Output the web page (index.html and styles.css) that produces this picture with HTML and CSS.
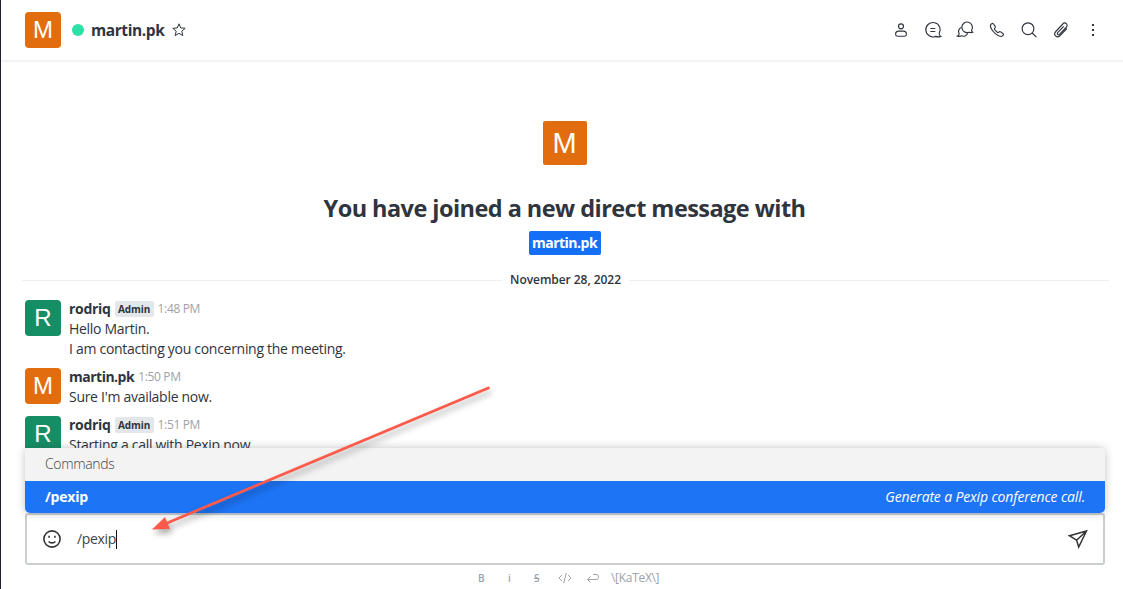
FILE: index.html
```
<!DOCTYPE html>
<html lang="en">
<head>
<meta charset="utf-8">
<title>martin.pk</title>
<link rel="stylesheet" href="styles.css">
</head>
<body>
<div class="room">
  <header class="header">
    <span class="avatar orange">M</span>
    <span class="status"></span>
    <span class="title">martin.pk</span>
    <svg class="star" viewBox="0 0 16 16"><path d="M8 1.800l1.700 4.100 4.500.4-3.400 2.900 1 4.400L8 11.300l-3.800 2.300 1-4.400L1.800 6.300l4.500-.4z"/></svg>
    <nav class="tools">
      <svg viewBox="0 0 20 20"><circle cx="10" cy="6.300" r="2.500"/><path d="M4.600 14.300c0-2 1.200-3.200 3-3.200h4.800c1.800 0 3 1.200 3 3.200 0 1.300-.6 1.900-1.700 1.900H6.300c-1.100 0-1.700-.6-1.700-1.900z"/></svg>
      <svg viewBox="0 0 20 20"><path d="M16.200 13.400A7.200 7.200 0 1 0 12.700 16.400c1.700.7 3.300.7 5.100 0-1.100-.6-1.700-1.700-1.600-3zM7.300 8.500h5M7.300 11.500h5"/></svg>
      <svg viewBox="0 0 20 20"><path d="M16.600 10.200A5.300 5.300 0 1 0 14 12.300c1.200.4 2.500.5 3.700 0-.8-.5-1.200-1.200-1.100-2.100zM6 7.600a5 5 0 0 0-1.900 6.200c0 1.200-.5 1.900-1.500 2.300 1.300.5 2.600.3 3.800-.3 2.400 1 5.200.2 6.300-2.500"/></svg>
      <svg viewBox="0 0 20 20"><path d="M4.100 4.100c.7-.7 1.700-1 2.400-.1l1.700 2.300c.5.700.2 1.300-.4 1.900-.6.500-.5 1 0 1.600l2.400 2.400c.6.600 1.100.6 1.600 0 .6-.7 1.200-.8 1.900-.3l2.200 1.600c.8.6.6 1.500-.2 2.200-1.300 1.300-4 .8-7.300-2.100C4.300 10.200 2.300 6 4.100 4.100z"/></svg>
      <svg viewBox="0 0 20 20"><circle cx="9" cy="8.700" r="5.900"/><path d="M13.200 13l4.200 4.200"/></svg>
      <svg viewBox="0 0 20 20"><path class="clip" d="M12.700 6.300l-6 6.400c-1.200 1.300.6 3 1.800 1.700l6.800-7.200c2.400-2.700-1.100-5.700-3.500-3.200l-7 7.500c-3.100 3.500 1.300 7.200 4.300 4.100l6.700-7.100"/></svg>
      <svg class="dots" viewBox="0 0 20 20"><path d="M9 4h2v2H9zM9 9h2v2H9zM9 14h2v2H9z"/></svg>
    </nav>
  </header>

  <main class="messages">
    <section class="intro">
      <span class="avatar large orange">M</span>
      <h1>You have joined a new direct message with</h1>
      <span class="mention">martin.pk</span>
    </section>
    <div class="divider"><span>November 28, 2022</span></div>
    <article class="message">
      <span class="avatar green">R</span>
      <div class="body">
        <div class="meta"><b>rodriq</b><span class="role">Admin</span><time>1:48 PM</time></div>
        <p>Hello Martin.</p>
        <p>I am contacting you concerning the meeting.</p>
      </div>
    </article>
    <article class="message">
      <span class="avatar orange">M</span>
      <div class="body">
        <div class="meta"><b>martin.pk</b><time>1:50 PM</time></div>
        <p>Sure I'm available now.</p>
      </div>
    </article>
    <article class="message">
      <span class="avatar green">R</span>
      <div class="body">
        <div class="meta"><b>rodriq</b><span class="role">Admin</span><time>1:51 PM</time></div>
        <p>Starting a call with Pexip now</p>
      </div>
    </article>
  </main>

  <footer class="footer">
    <div class="popup">
      <div class="popup-title"><span>Commands</span></div>
      <div class="command"><b>/pexip</b><i>Generate a Pexip conference call.</i></div>
    </div>
    <div class="composer">
      <svg class="smile" viewBox="0 0 20 20"><circle cx="10" cy="10" r="8.100"/><path d="M6.600 12.400c1.700 2 5.100 2 6.800 0M7.100 6.700v2M12.900 6.700v2"/></svg>
      <span class="typed">/pexip</span><span class="caret"></span>
      <svg class="send" viewBox="0 0 20 20"><path d="M1.500 6.700L18.500 2 10.700 18 8.600 11.200zM8.600 11.200L18.500 2"/></svg>
    </div>
    <div class="format">
      <b>B</b><span class="info">i</span><s>S</s>
      <svg viewBox="0 0 14 12"><path d="M4 3L1 6l3 3M10 3l3 3-3 3M8.300 1l-2.600 10"/></svg>
      <svg viewBox="0 0 14 12"><path d="M4.500 4.500l-3 3 3 3M1.500 7.500H10c2 0 2.500-.8 2.500-2.300S12 2.500 10 2.500H7"/></svg>
      <span class="katex">\[KaTeX\]</span>
    </div>
  </footer>
</div>
<svg class="arrow" viewBox="0 0 370 170"><path d="M349.500 12.500L26 148.500" /><path class="head" d="M12 154.500L25 142l5 12z"/></svg>
</body>
</html>
```

FILE: styles.css
```
* { box-sizing: border-box; }
body {
  margin: 0;
  background: #fff;
  color: #2f343d;
  font: 14px/20px "Open Sans", "Noto Sans", sans-serif;
}
svg { display: block; fill: none; stroke: #2f343d; flex: none; }
p, h1 { margin: 0; }
p, h1, span, b, i, time { white-space: nowrap; }
.room {
  height: 589px;
  display: flex;
  flex-direction: column;
  overflow: hidden;
  border-left: 1px solid #1f2329;
}
.header {
  height: 62px;
  flex: none;
  display: flex;
  align-items: center;
  padding: 0 20px 0 24px;
  border-bottom: 2px solid #f2f3f5;
}
.avatar {
  width: 36px;
  height: 36px;
  flex: none;
  display: flex;
  align-items: center;
  justify-content: center;
  border-radius: 4px;
  color: #fff;
  font: 24px/36px "Liberation Sans", Arial, sans-serif;
}
.orange { background: #e26d0e; }
.green { background: #158d65; }
.large { width: 44px; height: 44px; border-radius: 2px; font-size: 29px; }
.status { width: 12px; height: 12px; margin: 0 7px 0 11px; border-radius: 50%; background: #2de0a5; }
.title { width: 74px; font-size: 15.500px; font-weight: 700; letter-spacing: -.42px; }
.star { width: 16px; height: 16px; margin-left: 6px; }
.tools { display: flex; gap: 12px; margin-left: auto; }
.tools svg { width: 20px; height: 20px; stroke-width: 1.150; }
.tools .dots { fill: #2f343d; stroke: none; }
.messages { flex: 1; min-height: 0; }
.intro { height: 193px; padding: 59px 0 0 5px; display: flex; flex-direction: column; align-items: center; }
h1 { margin-top: 27px; font-size: 23.500px; line-height: 32px; font-weight: 700; letter-spacing: -.55px; }
.mention {
  height: 24px;
  width: 72px;
  margin-top: 7px;
  border-radius: 2px;
  background: #156ff5;
  color: #fff;
  font-weight: 700;
  line-height: 24px;
  letter-spacing: -.5px;
  text-align: center;
}
.divider {
  height: 20px;
  margin: 15px 14px 0 21px;
  display: flex;
  align-items: center;
  gap: 8px;
  font-size: 12px;
  font-weight: 600;
  letter-spacing: -.05px;
}
.divider::before, .divider::after { content: ""; flex: 1; height: 1px; background: #eeeff1; }
.message { display: flex; gap: 8px; padding: 0 24px; margin-bottom: 7px; }
.divider + .message { margin-top: 8px; }
.message .avatar { margin-top: 2px; }
.body { padding-top: 1px; }
.meta { height: 20px; display: flex; align-items: center; gap: 4px; }
.meta b { letter-spacing: -.5px; }
.meta b:has(+ .role) { letter-spacing: -.3px; }
.role {
  width: 39px;
  height: 16px;
  border-radius: 2px;
  background: #e4e7ea;
  font-size: 10px;
  font-weight: 700;
  line-height: 16px;
  text-align: center;
  letter-spacing: -.1px;
}
time { color: #9ea2a8; font-size: 12px; letter-spacing: -.35px; }
.message p { letter-spacing: -.29px; }
.footer { position: relative; height: 141px; flex: none; padding: 0 18px 0 24px; background: #fff; }
.popup {
  height: 65px;
  position: relative;
  border-radius: 5px;
  box-shadow: 0 0 8px rgba(47, 52, 61, .3);
}
.popup-title {
  height: 33px;
  padding: 6px 20px;
  border-radius: 5px 5px 0 0;
  background: #f3f3f3;
  color: #3f4248;
  font-weight: 300;
  letter-spacing: -.35px;
}
.command {
  height: 32px;
  padding: 0 20px;
  display: flex;
  align-items: center;
  justify-content: space-between;
  border-radius: 0 0 5px 5px;
  background: #1d74f5;
  color: #fff;
}
.command b { letter-spacing: -.2px; }
.command i { letter-spacing: -.15px; }
.composer {
  height: 52px;
  display: flex;
  align-items: center;
  padding: 0 15px;
  border: 2px solid #cbced1;
  border-radius: 3px;
}
.smile { width: 20px; height: 20px; stroke: #333; stroke-width: 1.600; }
.typed { margin-left: 15px; color: #444; letter-spacing: -.35px; }
.caret { width: 1px; height: 19px; background: #111; }
.send { width: 20px; height: 20px; margin-left: auto; stroke: #333; stroke-width: 1.500; }
.format {
  height: 24px;
  display: flex;
  align-items: center;
  padding: 1px 0 0 453px;
  color: #9ea2a8;
  font-size: 10px;
}
.format b, .info, s { width: 28px; font-weight: 600; }
.format s { width: 24px; }
.info { padding-left: 2px; }
.format svg { width: 14px; height: 12px; margin-right: 14px; stroke: #9ea2a8; }
.format svg + svg { margin-right: 11px; }
.katex { font-size: 12px; letter-spacing: -.3px; }
.arrow {
  position: absolute;
  left: 140px;
  top: 375px;
  width: 370px;
  height: 170px;
  stroke: #fc5b4b;
  stroke-width: 2.800;
  filter: drop-shadow(2px 4px 3px rgba(0, 0, 0, .35));
}
.head { fill: #fc5b4b; stroke: none; }
```
